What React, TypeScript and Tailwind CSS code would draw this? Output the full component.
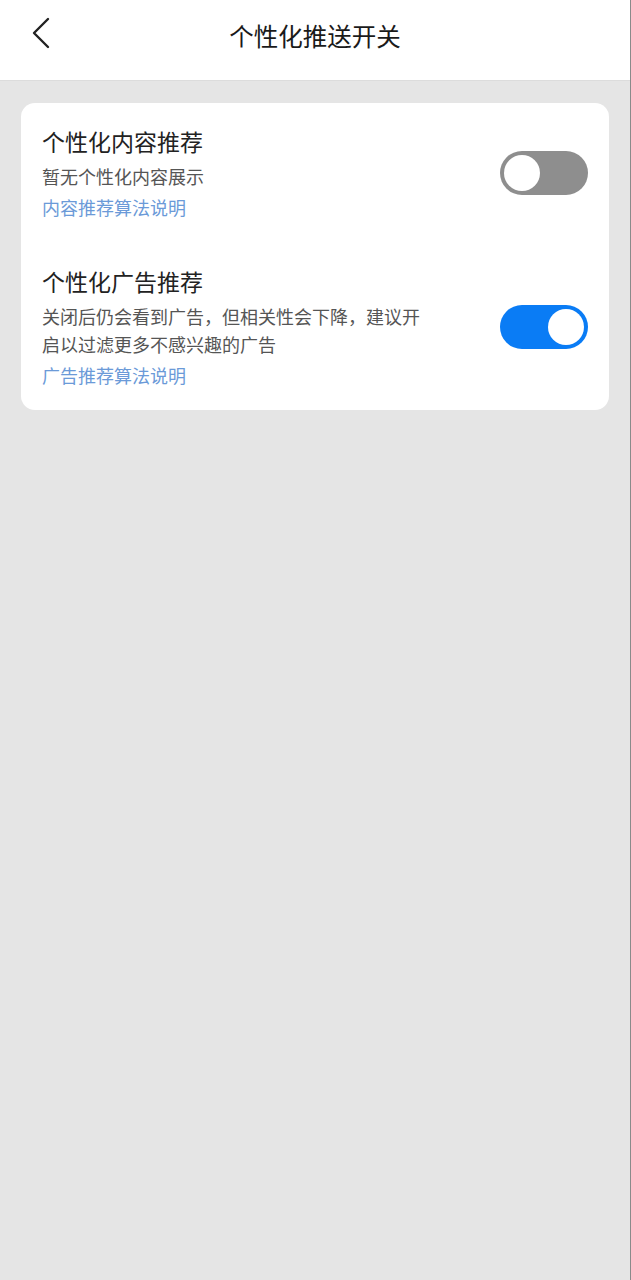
import React from "react";

const font = { fontFamily: '"Noto Sans CJK SC", "Noto Sans", sans-serif' };

function Toggle({ on }: { on: boolean }) {
  return (
    <div
      className={
        "w-[88px] h-[44px] rounded-full flex items-center shrink-0 p-[4px] " +
        (on ? "bg-[#0a7cf5] justify-end" : "bg-[#8e8e8e] justify-start")
      }
    >
      <div className="w-[36px] h-[36px] rounded-full bg-white" />
    </div>
  );
}

function Row({
  title,
  desc,
  link,
  on,
}: {
  title: string;
  desc: string;
  link: string;
  on: boolean;
}) {
  return (
    <div className="flex items-center justify-between">
      <div className="flex flex-col">
        <div className="text-[23px] leading-[32px] text-[#222]">{title}</div>
        <div className="mt-[5px] text-[18px] leading-[28px] text-[#555] max-w-[392px]">{desc}</div>
        <div className="mt-[3px] text-[18px] leading-[28px] text-[#6b9ad8]">{link}</div>
      </div>
      <Toggle on={on} />
    </div>
  );
}

export default function App() {
  return (
    <div className="w-[631px] h-[1280px] bg-[#e5e5e5] flex flex-col border-r border-[#8a8a8a]" style={font}>
      <div className="h-[81px] bg-white relative flex items-center justify-center border-b border-[#dcdcdc]">
        <svg className="absolute left-[30px] top-[17px]" width="22" height="32" viewBox="0 0 22 32" fill="none">
          <path d="M18 2 L4 16 L18 30" stroke="#222" strokeWidth="2.4" strokeLinecap="round" strokeLinejoin="round" />
        </svg>
        <div className="text-[24.5px] text-[#1a1a1a] -mt-[7px]">个性化推送开关</div>
      </div>
      <div className="px-[21px] pt-[22px]">
        <div className="bg-white rounded-[14px] pl-[21px] pr-[21px] pt-[22px] pb-[21px] flex flex-col gap-[44px]">
          <Row title="个性化内容推荐" desc="暂无个性化内容展示" link="内容推荐算法说明" on={false} />
          <Row
            title="个性化广告推荐"
            desc="关闭后仍会看到广告，但相关性会下降，建议开启以过滤更多不感兴趣的广告"
            link="广告推荐算法说明"
            on={true}
          />
        </div>
      </div>
    </div>
  );
}
